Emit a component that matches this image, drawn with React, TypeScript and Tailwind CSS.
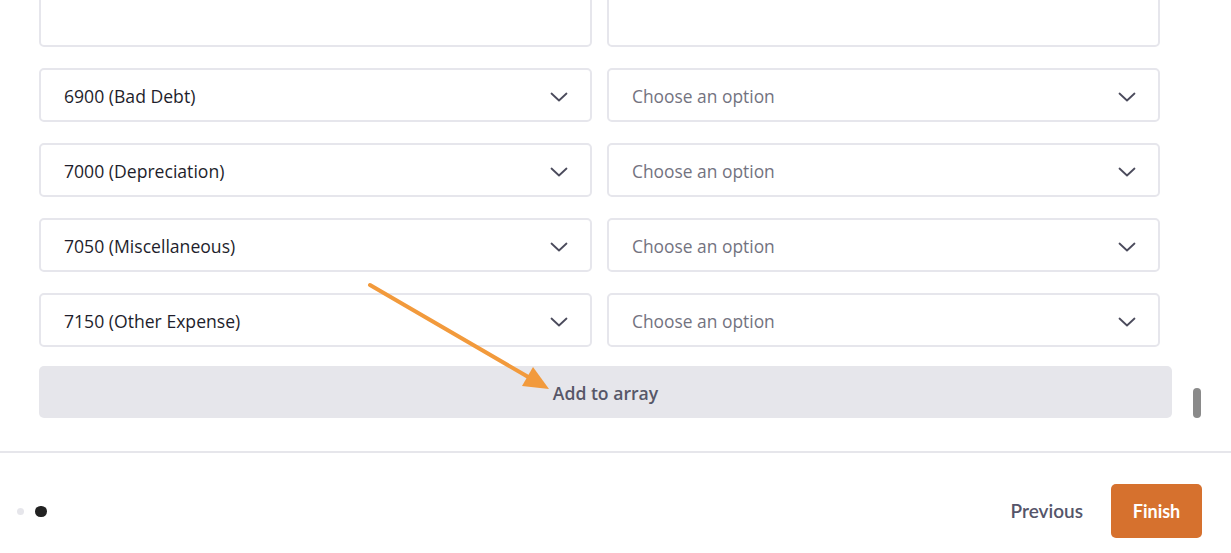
import React from "react";

const Chevron = () => (
  <svg width="18" height="10" viewBox="0 0 18 10" fill="none" className="shrink-0">
    <path d="M1.5 1.5 L9 8.5 L16.5 1.5" stroke="#4b4b5c" strokeWidth="1.8" strokeLinecap="round" strokeLinejoin="round" />
  </svg>
);

const Select = ({ value, blank }: { value?: string; blank?: boolean }) => (
  <div className="flex h-[54px] w-[553px] items-center justify-between rounded-[5px] border-2 border-[#e6e6ec] bg-white pl-[23px] pr-[22px] pt-[3px]">
    {blank ? null : value ? (
      <span className="text-[17.6px] text-[#1e1e2c]" style={{ fontFamily: "'Open Sans', sans-serif" }}>{value}</span>
    ) : (
      <span className="text-[17.4px] text-[#73737f]" style={{ fontFamily: "'Open Sans', sans-serif" }}>Choose an option</span>
    )}
    {blank ? null : <Chevron />}
  </div>
);

const rows = ["6900 (Bad Debt)", "7000 (Depreciation)", "7050 (Miscellaneous)", "7150 (Other Expense)"];

export default function App() {
  return (
    <div className="relative h-[553px] w-[1231px] overflow-hidden bg-white" style={{ fontFamily: "Lato, 'Noto Sans', sans-serif" }}>
      <div className="relative h-[451px] overflow-hidden">
        <div className="ml-[39px] mt-[-7px] flex w-[1133px] flex-col">
          <div className="flex flex-col gap-[21px]">
            <div className="flex gap-[15px]">
              <Select blank />
              <Select blank />
            </div>
            {rows.map((r, i) => (
              <div key={i} className="flex gap-[15px]">
                <Select value={r} />
                <Select />
              </div>
            ))}
          </div>
          <div className="mt-[19px] flex h-[52px] w-[1133px] items-center justify-center rounded-[5px] bg-[#e6e6eb] pt-[2px]">
            <span className="text-[17.6px] font-semibold text-[#575768]" style={{ fontFamily: "'Open Sans', sans-serif" }}>Add to array</span>
          </div>
        </div>
        <div className="absolute left-[1193px] top-[388px] h-[30px] w-[8px] rounded-full bg-[#8a8a8a]" />
        <svg className="absolute left-0 top-0" width="1231" height="451" viewBox="0 0 1231 451">
          <line x1="370" y1="285" x2="530" y2="378" stroke="#f29a3c" strokeWidth="4" strokeLinecap="round" />
          <polygon points="549,389 522,386 533,367" fill="#f29a3c" />
        </svg>
      </div>
      <div className="h-[2px] w-full bg-[#e6e6eb]" />
      <div className="flex items-center justify-between pl-[17px] pr-[29px] pt-[31px]">
        <div className="flex items-center gap-[11px]">
          <div className="h-[7px] w-[7px] rounded-full bg-[#e6e6eb]" />
          <div className="h-[11px] w-[12px] rounded-full bg-[#222222]" />
        </div>
        <div className="flex items-center gap-[28px]">
          <span className="text-[19px] font-semibold text-[#55556a]">Previous</span>
          <div className="flex h-[54px] w-[91px] items-center justify-center rounded-[5px] bg-[#d6712e]">
            <span className="text-[18px] font-bold text-white">Finish</span>
          </div>
        </div>
      </div>
    </div>
  );
}
